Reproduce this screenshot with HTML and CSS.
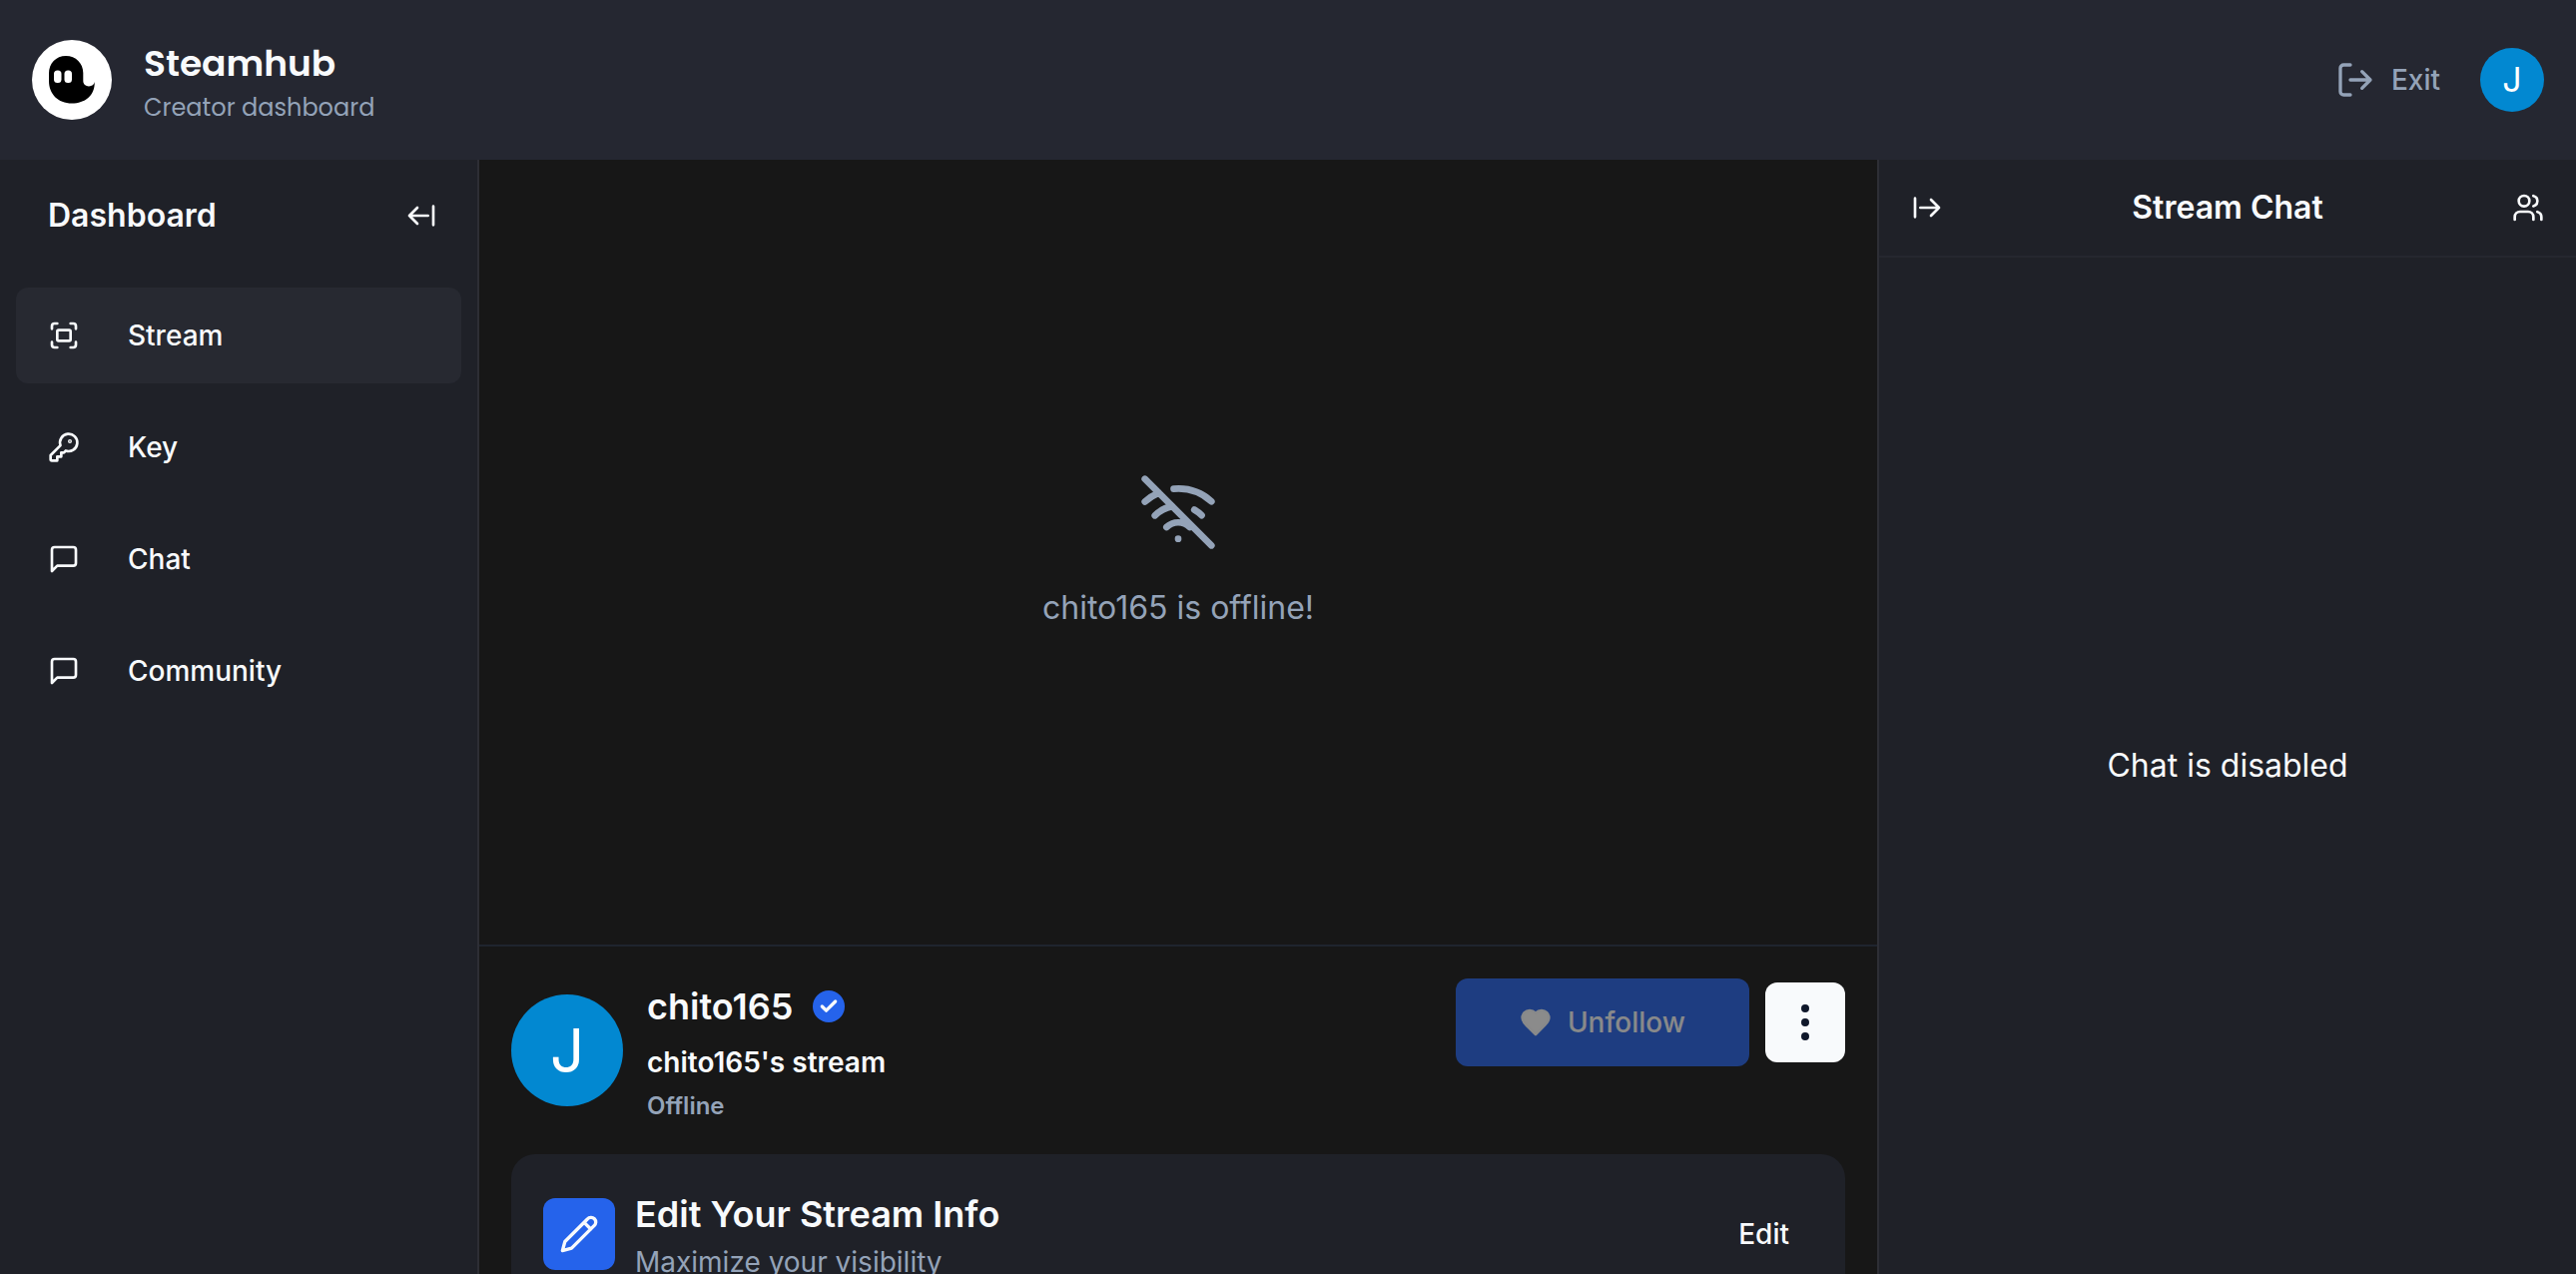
FILE: index.html
```html
<!DOCTYPE html>
<html lang="en">
<head>
<meta charset="utf-8">
<title>Steamhub - Creator dashboard</title>
<link rel="stylesheet" href="styles.css">
</head>
<body>
<header class="topbar">
  <a class="brand" href="#">
    <span class="brand-mark">
      <svg viewBox="0 0 80 80" aria-hidden="true"><path d="M17 33.500C17 23.500 24 16 34 16S51.300 23.500 51.300 33V41C51.300 44.500 54 46.400 57 46.400C60 46.400 62.400 44.500 62.800 42C63 56 53 63.500 40 63.500C26 63.500 17 54 17 41Z"/><rect class="eye" x="22" y="30.500" width="7.500" height="12.500" rx="3.500"/><rect class="eye" x="32.500" y="30.500" width="7.500" height="12.500" rx="3.500"/></svg>
    </span>
    <span class="brand-text">
      <span class="brand-name">Steamhub</span>
      <span class="brand-sub">Creator dashboard</span>
    </span>
  </a>
  <div class="account">
    <a class="exit" href="#">
      <svg class="icon icon-lg" viewBox="0 0 24 24" aria-hidden="true"><path d="M9 21H5a2 2 0 0 1-2-2V5a2 2 0 0 1 2-2h4M16 17l5-5-5-5M21 12H9"/></svg>
      Exit
    </a>
    <button class="avatar avatar-sm" type="button" aria-label="Account">J</button>
  </div>
</header>

<div class="layout">
  <aside class="sidebar">
    <div class="sidebar-head">
      <h2 class="panel-title">Dashboard</h2>
      <button class="icon-button" type="button" aria-label="Collapse">
        <svg class="icon" viewBox="0 0 24 24" aria-hidden="true"><path d="m9 6-6 6 6 6M3 12h14M21 19V5"/></svg>
      </button>
    </div>
    <nav class="nav">
      <a class="nav-item active" href="#">
        <svg class="icon" viewBox="0 0 24 24" aria-hidden="true"><path d="M3 7V5a2 2 0 0 1 2-2h2M17 3h2a2 2 0 0 1 2 2v2M21 17v2a2 2 0 0 1-2 2h-2M7 21H5a2 2 0 0 1-2-2v-2"/><rect x="7" y="8" width="10" height="8" rx="1"/></svg>
        Stream
      </a>
      <a class="nav-item" href="#">
        <svg class="icon" viewBox="0 0 24 24" aria-hidden="true"><path d="M2 18v3c0 .6.4 1 1 1h4v-3h3v-3h2l1.400-1.400a6.500 6.500 0 1 0-4-4Z"/><circle cx="16.500" cy="7.500" r=".5"/></svg>
        Key
      </a>
      <a class="nav-item" href="#">
        <svg class="icon" viewBox="0 0 24 24" aria-hidden="true"><path d="M21 15a2 2 0 0 1-2 2H7l-4 4V5a2 2 0 0 1 2-2h14a2 2 0 0 1 2 2z"/></svg>
        Chat
      </a>
      <a class="nav-item" href="#">
        <svg class="icon" viewBox="0 0 24 24" aria-hidden="true"><path d="M21 15a2 2 0 0 1-2 2H7l-4 4V5a2 2 0 0 1 2-2h14a2 2 0 0 1 2 2z"/></svg>
        Community
      </a>
    </nav>
  </aside>

  <main class="main">
    <section class="video">
      <svg class="icon icon-xl" viewBox="0 0 24 24" aria-hidden="true"><path d="M2 2l20 20M8.500 16.500a5 5 0 0 1 7 0M2 8.820a15 15 0 0 1 4.170-2.650M10.660 5c4.010-.36 8.140.9 11.340 3.760M16.850 11.250a10 10 0 0 1 2.220 1.680M5 13a10 10 0 0 1 5.240-2.760M12 20h.01"/></svg>
      <p class="video-text">chito165 is offline!</p>
    </section>
    <section class="profile">
      <div class="profile-info">
        <span class="avatar avatar-lg">J</span>
        <div class="profile-text">
          <h1 class="heading">chito165
            <span class="verified"><svg class="icon icon-check" viewBox="0 0 24 24" aria-hidden="true"><path d="M20 6 9 17l-5-5"/></svg></span>
          </h1>
          <p class="stream-name">chito165's stream</p>
          <p class="status">Offline</p>
        </div>
      </div>
      <div class="actions">
        <button class="unfollow" type="button" disabled>
          <svg class="icon icon-filled" viewBox="0 0 24 24" aria-hidden="true"><path d="M19 14c1.490-1.460 3-3.210 3-5.500A5.500 5.500 0 0 0 16.500 3c-1.760 0-3 .5-4.500 2-1.500-1.500-2.740-2-4.500-2A5.500 5.500 0 0 0 2 8.500c0 2.300 1.500 4.050 3 5.500l7 7Z"/></svg>
          Unfollow
        </button>
        <button class="more" type="button" aria-label="More">
          <svg class="icon icon-more" viewBox="0 0 24 24" aria-hidden="true"><circle cx="12" cy="12" r="1"/><circle cx="12" cy="5" r="1"/><circle cx="12" cy="19" r="1"/></svg>
        </button>
      </div>
    </section>
    <section class="card">
      <span class="card-icon"><svg class="icon icon-lg" viewBox="0 0 24 24" aria-hidden="true"><path d="M17 3a2.850 2.830 0 1 1 4 4L7.500 20.500 2 22l1.500-5.500ZM15 5l4 4"/></svg></span>
      <div class="card-text">
        <h2 class="heading">Edit Your Stream Info</h2>
        <p class="card-sub">Maximize your visibility</p>
      </div>
      <button class="edit" type="button">Edit</button>
    </section>
  </main>

  <aside class="chat">
    <div class="chat-head">
      <button class="icon-button" type="button" aria-label="Hide chat">
        <svg class="icon" viewBox="0 0 24 24" aria-hidden="true"><path d="M3 5v14M21 12H7M15 18l6-6-6-6"/></svg>
      </button>
      <h2 class="panel-title">Stream Chat</h2>
      <button class="icon-button" type="button" aria-label="Community">
        <svg class="icon" viewBox="0 0 24 24" aria-hidden="true"><path d="M16 21v-2a4 4 0 0 0-4-4H6a4 4 0 0 0-4 4v2M22 21v-2a4 4 0 0 0-3-3.870M16 3.130a4 4 0 0 1 0 7.750"/><circle cx="9" cy="7" r="4"/></svg>
      </button>
    </div>
    <p class="chat-empty">Chat is disabled</p>
  </aside>
</div>
</body>
</html>
```
FILE: styles.css
```css
:root {
  --bar: #252731;
  --panel: #1f2128;
  --line: #2d2e35;
  --text: #f8fafc;
  --muted: #94a3b8;
  --blue: #2563eb;
}

* { box-sizing: border-box; }

body {
  margin: 0;
  height: 100vh;
  display: flex;
  flex-direction: column;
  overflow: hidden;
  background: #171717;
  color: var(--text);
  font: 400 28px/40px Inter, sans-serif;
}

h1, h2, p { margin: 0; font-weight: inherit; }
a { color: inherit; text-decoration: none; }
button {
  margin: 0;
  padding: 0;
  border: 0;
  background: none;
  color: inherit;
  font: inherit;
  cursor: pointer;
}

.icon {
  display: block;
  flex: none;
  width: 32px;
  height: 32px;
  fill: none;
  stroke: currentColor;
  stroke-width: 2;
  stroke-linecap: round;
  stroke-linejoin: round;
}
.icon-lg { width: 40px; height: 40px; }
.icon-xl { width: 80px; height: 80px; }
.icon-more { width: 48px; height: 48px; }
.icon-check { width: 20px; height: 20px; stroke-width: 4; }
.icon-filled { fill: #fff; }

.icon-button { padding: 16px; border-radius: 12px; }

.avatar {
  display: flex;
  flex: none;
  align-items: center;
  justify-content: center;
  border-radius: 50%;
  background: #0288d1;
  color: #fff;
}
.avatar-sm { width: 64px; height: 64px; font-size: 34px; }
.avatar-lg { width: 112px; height: 112px; font-size: 60px; }

/* Top bar */
.topbar {
  flex: none;
  display: flex;
  align-items: center;
  justify-content: space-between;
  height: 160px;
  padding: 0 32px;
  background: var(--bar);
}
.brand { display: flex; align-items: center; gap: 32px; }
.brand-mark { width: 80px; height: 80px; border-radius: 50%; background: #fff; }
.brand-mark svg { display: block; fill: #000; }
.brand-mark .eye { fill: #fff; }
.brand-text {
  display: flex;
  flex-direction: column;
  font-family: Poppins, Inter, sans-serif;
}
.brand-name { font-size: 36px; line-height: 56px; font-weight: 600; }
.brand-sub { font-size: 24px; line-height: 32px; color: var(--muted); }
.account { display: flex; align-items: center; gap: 16px; }
.exit {
  display: flex;
  align-items: center;
  gap: 16px;
  padding: 16px 24px;
  color: var(--muted);
  font-weight: 500;
}

/* Columns */
.layout {
  flex: 1;
  min-height: 0;
  display: grid;
  grid-template-columns: 480px minmax(0, 1fr) 700px;
}
.panel-title { font-size: 32px; line-height: 48px; font-weight: 600; }

.sidebar { background: var(--panel); border-right: 2px solid var(--line); }
.sidebar-head {
  display: flex;
  align-items: center;
  justify-content: space-between;
  padding: 24px 24px 24px 48px;
}
.nav { display: flex; flex-direction: column; gap: 16px; padding: 16px; }
.nav-item {
  display: flex;
  align-items: center;
  gap: 48px;
  height: 96px;
  padding: 0 32px;
  border-radius: 12px;
  font-weight: 500;
}
.nav-item.active { background: #272931; }

/* Stream */
.main { overflow-y: auto; scrollbar-width: none; }
.video {
  display: flex;
  flex-direction: column;
  align-items: center;
  justify-content: center;
  gap: 32px;
  aspect-ratio: 16 / 9;
  border-bottom: 2px solid #1f242e;
  color: var(--muted);
}
.video-text { font-size: 32px; line-height: 48px; }

.profile {
  display: flex;
  align-items: flex-start;
  justify-content: space-between;
  padding: 32px;
}
.profile-info { display: flex; align-items: center; gap: 24px; }
.profile-text { display: flex; flex-direction: column; gap: 8px; }
.heading {
  display: flex;
  align-items: center;
  gap: 20px;
  font-size: 36px;
  line-height: 56px;
  font-weight: 600;
}
.verified {
  display: flex;
  align-items: center;
  justify-content: center;
  width: 32px;
  height: 32px;
  border-radius: 50%;
  background: var(--blue);
}
.stream-name { font-weight: 600; }
.status { font-size: 24px; line-height: 32px; font-weight: 600; color: var(--muted); }

.actions { display: flex; align-items: center; gap: 16px; }
.unfollow {
  display: flex;
  align-items: center;
  gap: 16px;
  height: 88px;
  padding: 0 64px;
  border-radius: 12px;
  background: var(--blue);
  font-weight: 500;
  opacity: 0.5;
}
.more {
  display: flex;
  align-items: center;
  justify-content: center;
  width: 80px;
  height: 80px;
  border-radius: 12px;
  background: var(--text);
  color: #0f172a;
}

.card {
  display: flex;
  align-items: center;
  gap: 20px;
  margin: 0 32px 32px;
  padding: 32px;
  border-radius: 24px;
  background: var(--panel);
}
.card-icon { padding: 16px; border-radius: 12px; background: var(--blue); }
.card-text { flex: 1; }
.card-sub { color: var(--muted); }
.edit { padding: 20px 24px; font-weight: 500; }

/* Chat */
.chat {
  display: flex;
  flex-direction: column;
  background: var(--panel);
  border-left: 2px solid var(--line);
}
.chat-head {
  display: flex;
  align-items: center;
  justify-content: space-between;
  padding: 16px;
  border-bottom: 2px solid #25272f;
}
.chat-empty {
  flex: 1;
  display: flex;
  align-items: center;
  justify-content: center;
  font-size: 32px;
  line-height: 48px;
}
```
